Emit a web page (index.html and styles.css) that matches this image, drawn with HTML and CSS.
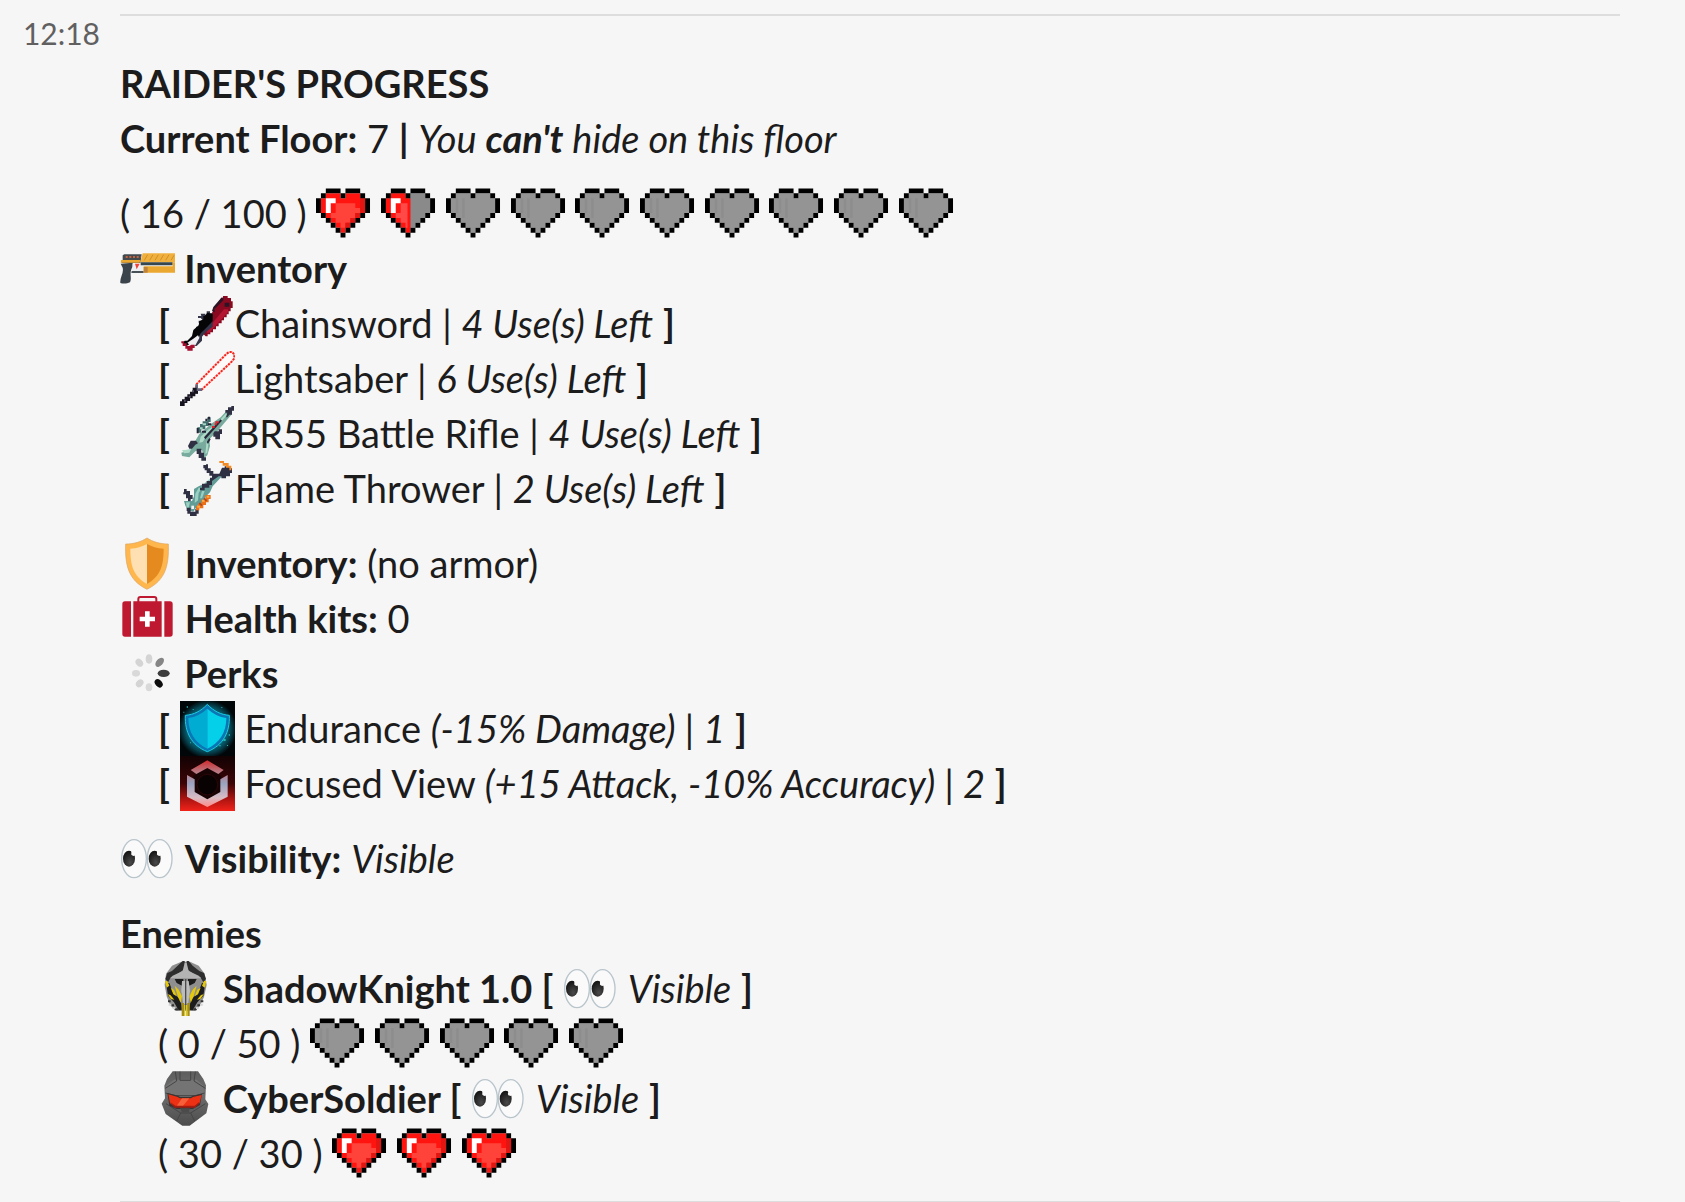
FILE: index.html
```html
<!DOCTYPE html>
<html lang="en">
<head>
<meta charset="utf-8">
<title>Raider's Progress</title>
<link rel="stylesheet" href="styles.css">
</head>
<body>
<svg class="sprites" aria-hidden="true">
  <defs>
    <path id="heart-outline" d="M2 0h3v1H2zM6 0h3v1H6zM1 1h1v1H1zM5 1h1v1H5zM9 1h1v1H9zM0 2h1v3H0zM10 2h1v3h-1zM1 5h1v1H1zM9 5h1v1H9zM2 6h1v1H2zM8 6h1v1H8zM3 7h1v1H3zM7 7h1v1H7zM4 8h1v1H4zM6 8h1v1H6zM5 9h1v1H5z"/>
    <path id="heart-fill" d="M2 1h3v1h1V1h3v1h1v3H9v1H8v1H7v1H6v1H5V8H4V7H3V6H2V5H1V2h1z"/>
    <radialGradient id="pupil" cx="0.6" cy="0.75" r="0.8"><stop offset="0" stop-color="#4a4a4a"/><stop offset="1" stop-color="#0f0f0f"/></radialGradient>
    <linearGradient id="steel" x1="0" y1="0" x2="0" y2="1"><stop offset="0" stop-color="#d02a2c"/><stop offset="0.25" stop-color="#b87a84"/><stop offset="0.5" stop-color="#9aa3c0"/><stop offset="0.8" stop-color="#d9bcc4"/><stop offset="1" stop-color="#ff8a86"/></linearGradient>
    <linearGradient id="ember" x1="0" y1="0" x2="0" y2="1"><stop offset="0" stop-color="#120203"/><stop offset="0.5" stop-color="#3c0506"/><stop offset="0.8" stop-color="#b31512"/><stop offset="1" stop-color="#f0231a"/></linearGradient>
    <radialGradient id="aura"><stop offset="0.5" stop-color="#0a8fa6"/><stop offset="0.8" stop-color="#06424f"/><stop offset="1" stop-color="#010608"/></radialGradient>
    <linearGradient id="helm" x1="0" y1="0" x2="0" y2="1"><stop offset="0" stop-color="#5d5d5d"/><stop offset="0.4" stop-color="#6f6f6f"/><stop offset="1" stop-color="#4c4c4c"/></linearGradient>
    <filter id="soft"><feGaussianBlur stdDeviation="2"/></filter>

    <symbol id="heart-full" viewBox="0 -0.5 11.2 11.2">
      <use href="#heart-fill" fill="#ff1410"/>
      <path fill="#ff433a" d="M4 3h4v1h1v1H8v1H7v1H6v1H5V7H4V6H3V5h1z"/>
      <path fill="#e01612" d="M9 2h1v3H9zM8 5h1v1H8zM7 6h1v1H7zM6 7h1v1H6z"/>
      <path fill="#fff" d="M2 2h2v1H3v2H2z"/>
      <use href="#heart-outline"/>
    </symbol>
    <symbol id="heart-empty" viewBox="0 -0.5 11.2 11.2">
      <use href="#heart-fill" fill="#949494"/>
      <path fill="#8d8d8d" d="M2 2h.5v3H2zM3.3 2h.5v4h-.5z"/>
      <use href="#heart-outline"/>
    </symbol>
    <symbol id="heart-half" viewBox="0 -0.5 11.2 11.2">
      <use href="#heart-fill" fill="#8a8a8a"/>
      <path fill="#ff1410" d="M2 1h3v1h1v7H5V8H4V7H3V6H2V5H1V2h1z"/>
      <path fill="#ff4a48" d="M4 3h1.4v5H5V7H4V6H3V5h1z"/>
      <path fill="#fff" d="M2 2h2v1H3v2H2z"/>
      <use href="#heart-outline"/>
    </symbol>
    <symbol id="eyes" viewBox="0 0 165 165">
      <g fill="#fafafa" stroke="#b9c5cc" stroke-width="4"><ellipse cx="42" cy="83" rx="37" ry="57"/><ellipse cx="119" cy="83" rx="37" ry="57"/></g>
      <g fill="url(#pupil)"><ellipse cx="27" cy="83" rx="18" ry="24"/><ellipse cx="104" cy="83" rx="18" ry="24"/></g>
      <g fill="#fafafa"><path d="M30 57q6 4 4 10t7 8l8-4-6-14z"/><path d="M107 57q6 4 4 10t7 8l8-4-6-14z"/></g>
    </symbol>
  </defs>
</svg>

<main class="message">
  <time class="time">12:18</time>
  <article class="body">
    <section class="block">
      <h1 class="row">RAIDER'S PROGRESS</h1>
      <p class="row"><b>Current Floor:</b> 7 <b>|</b> <i>You <b>can't</b> hide on this floor</i></p>
    </section>

    <section class="block">
      <p class="row">( 16 / 100 )
        <span class="hearts">
          <svg class="emoji"><use href="#heart-full"/></svg>
          <svg class="emoji"><use href="#heart-half"/></svg>
          <svg class="emoji"><use href="#heart-empty"/></svg>
          <svg class="emoji"><use href="#heart-empty"/></svg>
          <svg class="emoji"><use href="#heart-empty"/></svg>
          <svg class="emoji"><use href="#heart-empty"/></svg>
          <svg class="emoji"><use href="#heart-empty"/></svg>
          <svg class="emoji"><use href="#heart-empty"/></svg>
          <svg class="emoji"><use href="#heart-empty"/></svg>
          <svg class="emoji"><use href="#heart-empty"/></svg>
        </span>
      </p>
      <h2 class="row">
        <svg class="emoji" viewBox="0 0 165 165">
          <path fill="#424a4f" d="M8 43l5-3h52l-4 26H4l4-9z"/>
          <path fill="#3b444a" d="M2 68l36-3v12c-5 7-7 16-6 28 1 10 0 14-2 19-8 4-21 5-29 2C-1 108 12 98 8 80z"/>
          <path fill="#edf0f2" d="M38 68h32v27H36z"/>
          <path fill="#f44336" d="M45 68h14L50 85z"/>
          <path fill="#485157" d="M35 90h36v6H34z"/>
          <path fill="#f0b03e" d="M68 37h97v27H61z"/>
          <path stroke="#d18f27" stroke-width="3" d="M83 41L73 58M99 41L89 58M115 41l-10 17M131 41l-10 17M147 41l-10 17M162 43l-9 15"/>
          <path fill="#37474f" d="M62 64h96v9H62z"/>
          <path fill="#eba830" d="M71 76h94v19H71zM158 64h7v14h-7z"/>
          <path fill="#be823b" d="M71 78h12v17H71z"/>
          <path stroke="#ef6c3e" stroke-width="4" stroke-dasharray="6 5" d="M17 48h45"/>
          <path fill="#eba830" d="M3 57h58l-2 8H2z"/>
        </svg>
        Inventory
      </h2>
      <ul class="list">
        <li class="row"><b>[</b>
          <svg class="emoji" viewBox="0 0 165 165">
            <path fill="#890a20" d="M124 5h5V0h14v6h10v10h5v20h-6v10h-6v9h-6v9h-8v9h-7v9h-9v9h-8v9h-9v9h-8v6h-8v6h-6L60 104l40-60z"/>
            <path fill="#b41632" d="M132 40h12v8l-56 62h-8v-8z"/>
            <path fill="#2b1424" d="M124 5h6v8l-26 26v10l-8-4 4-12zM134 20h14v12h-14z"/>
            <path fill="#35354a" d="M62 53h14v5h10v-4h-6v-8h10v6h8v40L78 108 66 122v12L50 150h-6v-8l14-18-2-20-8-2V92l12 2 4-8-8-6v-6h14l-8-8h-8v-6h10z"/>
            <path fill="#050507" d="M82 50l16 4v22L76 98 62 112l-8 18-22 12-12 8-12-8 6-8h8l14-14 4-18 16-14 2-12 12-6V60h4z"/>
            <path fill="#f0edf2" d="M40 128l14-10 4 8-12 22H30l-8-8z"/>
            <path fill="#a40f2f" d="M4 136h8v6h8v8h8l6-4h10v10h-6v8H22v-6h-6v-8H8v-8H4z"/>
          </svg>Chainsword | <i>4 Use(s) Left</i> <b>]</b></li>
        <li class="row"><b>[</b>
          <svg class="emoji" viewBox="0 0 165 165">
            <path fill="#fffafa" d="M52 104L144 8h16v14L66 114z"/>
            <path fill="none" stroke="#ffb9b3" stroke-width="5" d="M49 112V100l90-91 8-6h10l6 8v11l-8 10-90 84"/>
            <path fill="none" stroke="#f4241c" stroke-width="6" stroke-dasharray="6 4" d="M49 110V100l90-91 8-6h10l6 8v11l-8 10-90 84"/>
            <path fill="#66657c" d="M46 100h8v12h12v8H54v8h-8v-8h-6v-8h6z"/>
            <path fill="#16131f" d="M38 110h12v10h4v8h-8v8h-8v6h-8v8h-8v6h-8v9H0v-14h6v-6h8v-8h8v-7h8v-8h8z"/>
            <path fill="#555266" d="M36 118h6v6h-6zM26 134h6v6h-6zM12 146h5v6h-5z"/>
          </svg>Lightsaber | <i>6 Use(s) Left</i> <b>]</b></li>
        <li class="row"><b>[</b>
          <svg class="emoji" viewBox="0 0 165 165">
            <path fill="#78ab9d" d="M140 14h16v10L112 76l-24 24 2 20-8 28-10 8-6-24-20 4-18 18-22-4-2-10 26-8 28-48 40-34 24-16z"/>
            <path fill="#addbc8" d="M136 24h8l-32 36-24 18-20 30-10 2 4-18 24-22 20-12zM80 104h6l-4 36-6 4zM6 132h10l18-4-6 12-16 2z"/>
            <path fill="#303044" d="M144 4h10V0h8v14h-6v12h-8l-6 8h-4l4-14h-6V12h8zM104 76h12v-6h10v14h-6v16h-14V92h-6V82zM32 104h16l6 8-8 4-10 12h-8l-4-8zM50 128h14v12h8v14h6v10H64v-8h-8v-12h-6z"/>
            <path fill="#27273a" d="M72 94l50-54 4 4-50 56zM80 108l8-12 4 4-8 14z"/>
            <path fill="#416c6c" d="M60 54h8v-8h14V34h10v14h-6v12H76v10H64v10H52V64h8z"/>
            <path fill="#262639" d="M76 38h8v-6h6v8h-8v6h-6zM50 66h6v16h-6zM84 52h10v6H84zM66 74h12v6H66z"/>
            <path fill="#a6d3c3" d="M68 52h10v6H68zM60 64h8v6h-8z"/>
            <path fill="#e6212a" d="M106 46h10v6h-6v6h-6v-6h2zM96 60h8v6h-8z"/>
          </svg>BR55 Battle Rifle | <i>4 Use(s) Left</i> <b>]</b></li>
        <li class="row"><b>[</b>
          <svg class="emoji" viewBox="0 0 165 165">
            <path fill="#629c96" d="M106 44l20 2-28 30-8 18-14 14-10 24-14 2-12 18-16-4-8-14-4-14h24l6-14V84l14-8 22-10z"/>
            <path fill="#9ad0c2" d="M56 80h10l-10 16-2 22-10 8 2-28zM92 52h8l-14 14H74zM18 124h12l-4 16h-6zM66 90h8l-8 22h-6z"/>
            <path fill="#303044" d="M70 12h8v-2h6v12h8v8h8v8h18l8-18h8v-4h16v6h6v14h-6v10h-12v6h-14v-6h-8L96 60v12h-8v8H74v8H60v-8h6V68h14v-8h10V50h6v-6h-8v-8h-8v-8h-6v-6h-4zM12 84h8v6h10v12h8v12h-6v6h-8v-8h-6v-12h-8v-6h2zM20 140h12v12h14v-8h10v14h-6v7H30v-7h-8v-8h-2z"/>
            <path fill="#f28a28" d="M118 0h14v6h14v8h8v14h-6v-8h-10v-6h-10V6h-10z"/>
            <path fill="#eb7119" d="M76 102h16v12h-6v10h-8v8h-8v10H58v6H48v-14h6v-6h10v-12h12z"/>
            <path fill="#ffad42" d="M80 104h8v6h-8zM66 116h8v6h-8zM52 134h8v6h-8z"/>
            <path fill="#b04b1d" d="M74 110l8 8-4 4-8-8zM60 124l8 8-4 4-8-8z"/>
            <path fill="#f6f2f2" d="M34 134h8v10h-8z"/>
          </svg>Flame Thrower | <i>2 Use(s) Left</i> <b>]</b></li>
      </ul>
    </section>

    <section class="block">
      <p class="row">
        <svg class="emoji" viewBox="0 0 165 165">
          <path fill="#ffb74d" stroke="#d9a563" stroke-width="2" d="M81 6c17 11 38 18 64 18 2 62-7 108-64 136C24 132 15 86 17 24c26 0 47-7 64-18z"/>
          <path fill="#ffe0b2" d="M81 24c-15 8-30 13-50 14 0 50 9 82 50 106z"/>
          <path fill="#e58a1f" d="M81 24c15 8 30 13 50 14 0 50-9 82-50 106z"/>
        </svg>
        <b>Inventory:</b> (no armor)
      </p>
      <p class="row">
        <svg class="emoji" viewBox="0 0 165 165">
          <g fill="#be1931"><path d="M15 31h18v106H15q-8 0-8-8V39q0-8 8-8zM40 31h85v106H40zM133 31h17q8 0 8 8v90q0 8-8 8h-17z"/></g>
          <path fill="none" stroke="#be1931" stroke-width="6" d="M55 33V24q0-6 6-6h42q6 0 6 6v9"/>
          <path fill="#fff" d="M75 61h14v16h16v14H89v16H75V91H59V77h16z"/>
        </svg>
        <b>Health kits:</b> 0
      </p>
      <h2 class="row">
        <svg class="emoji" viewBox="0 0 165 165">
          <g filter="url(#soft)">
            <ellipse cx="87" cy="39" rx="10" ry="14" fill="#d4d4d4"/>
            <ellipse cx="119" cy="49" rx="10" ry="16" fill="#858585" transform="rotate(42 119 49)"/>
            <ellipse cx="131" cy="82" rx="18" ry="11" fill="#3c3c3c"/>
            <ellipse cx="116" cy="112" rx="10" ry="14" fill="#080808" transform="rotate(-42 116 112)"/>
            <ellipse cx="87" cy="124" rx="10" ry="12" fill="#d9d9d9"/>
            <ellipse cx="59" cy="112" rx="10" ry="13" fill="#d4d4d4" transform="rotate(42 59 112)"/>
            <ellipse cx="48" cy="82" rx="12" ry="10" fill="#d9d9d9"/>
            <ellipse cx="58" cy="50" rx="10" ry="13" fill="#d4d4d4" transform="rotate(-42 58 50)"/>
          </g>
        </svg>
        Perks
      </h2>
      <ul class="list">
        <li class="row"><b>[</b>
          <svg class="emoji" viewBox="0 0 165 165">
            <path fill="#010608" d="M0 0h165v165H0z"/>
            <circle cx="82" cy="84" r="88" fill="url(#aura)"/>
            <path fill="#0b76b4" stroke="#18cde0" stroke-width="3" d="M82 10c20 21 40 31 66 33 2 50-18 90-66 109C34 133 14 93 16 43 42 41 62 31 82 10z"/>
            <path fill="#00acd1" d="M82 23C65 38 46 48 25 51c0 42 19 74 57 92z"/>
            <path fill="#05d0ea" d="M82 23c17 15 36 25 57 28 0 42-19 74-57 92z"/>
            <path fill="#25b5b4" d="M20 16h4v4h-4zM38 24h3v3h-3zM10 32h3v3h-3zM124 18h3v3h-3zM130 114h7v6h-7zM146 100h4v4h-4zM118 132h4v4h-4zM141 132h3v3h-3zM30 124h3v3h-3z"/>
          </svg>
          Endurance <i>(-15% Damage) | 1</i> <b>]</b></li>
        <li class="row"><b>[</b>
          <svg class="emoji" viewBox="0 0 165 165">
            <path fill="url(#ember)" d="M0 0h165v165H0z"/>
            <path fill="#180304" d="M40 60l42-25 42 25v50l-42 24-42-24z"/>
            <path fill="url(#steel)" d="M32 42l50-29 49 29-16 12-33-18-33 18zM21 57l23 13v38l38 22 39-22V70l22-13v65l-61 31-61-31z"/>
            <circle cx="82" cy="86" r="31" fill="#090203" stroke="#3d0809" stroke-width="2"/>
          </svg>
          Focused View <i>(+15 Attack, -10% Accuracy) | 2</i> <b>]</b></li>
      </ul>
    </section>

    <section class="block">
      <p class="row"><svg class="emoji"><use href="#eyes"/></svg> <b>Visibility:</b> <i>Visible</i></p>
    </section>

    <section class="block">
      <h2 class="row">Enemies</h2>
      <ul class="list">
        <li class="enemy">
          <p class="row">
            <svg class="emoji" viewBox="0 0 165 165">
              <path fill="#8f8f8f" d="M70 2h26l26 12 18 24 6 34-8 36-12 26-14 16H54l-18-18-10-26-6-34 4-34L42 14z"/>
              <path fill="#2e2e2e" d="M74 0h6v24L60 38 38 50l-8 14-8-10 6-18 14-6zM92 0h-6v24l20 14 22 12 8 14 8-10-6-18-14-6-20-16z"/>
              <path fill="#b3b3b3" d="M80 6h6l6 24 30 14 8 8H36l8-8 30-14z"/>
              <path fill="#1d1d1d" d="M50 54h26v8l-4 12-16-8zM90 54h26l-6 12-16 8-4-12zM24 66h10l12 30 22 20 4 30-10 2-14-24-18-20zM142 66h-10l-12 30-22 20-4 30 10 2 14-24 18-20z"/>
              <path fill="#bcbcbc" d="M72 60h20l4 30-6 40H76l-6-40z"/>
              <path fill="#4c4c4c" d="M81 54h4v92h-4z"/>
              <path fill="#e6c80a" d="M21 60h7l6 14-8 6zM145 60h-7l-6 14 8 6zM38 80l10 6 8 20-10-6zM50 74l12 12 10 20-4 20-8-18zM128 80l-10 6-8 20 10-6zM116 74l-12 12-10 20 4 20 8-18zM29 100l8 2 12 14-10-2zM137 100l-8 2-12 14 10-2z"/>
              <path fill="#a58d12" d="M71 126h7v39h-7zM88 126h7v39h-7z"/>
              <path fill="#ddc51f" d="M78 132h4v33h-4zM84 132h4v33h-4z"/>
              <path fill="#333" d="M30 118h8v6h-8zM40 130h8v6h-8zM50 142h10v6H50zM128 118h8v6h-8zM118 130h8v6h-8zM106 142h10v6h-10z"/>
              <path fill="#d4d4d4" d="M32 128h8v6h-8zM44 138h8v6h-8zM126 128h8v6h-8zM114 138h8v6h-8z"/>
            </svg>
            <b>ShadowKnight 1.0 [</b> <svg class="emoji"><use href="#eyes"/></svg> <i>Visible</i> <b>]</b>
          </p>
          <p class="row">( 0 / 50 )
            <span class="hearts">
              <svg class="emoji"><use href="#heart-empty"/></svg>
              <svg class="emoji"><use href="#heart-empty"/></svg>
              <svg class="emoji"><use href="#heart-empty"/></svg>
              <svg class="emoji"><use href="#heart-empty"/></svg>
              <svg class="emoji"><use href="#heart-empty"/></svg>
            </span>
          </p>
        </li>
        <li class="enemy">
          <p class="row">
            <svg class="emoji" viewBox="0 0 165 165">
              <path fill="url(#helm)" d="M44 1h76l16 23 8 19-2 42 9 14-6 28-50 37H73l-50-35-12-31 10-16-2-38 8-20z"/>
              <path fill="#747474" d="M48 26h68l20 18 2 24-26 6H54l-32-6 2-24z"/>
              <path fill="none" stroke="#454545" stroke-width="3" d="M52 2l4 28-34 22M112 2l-4 28 34 22M66 2v26h32V2M22 66l32 8h58l28-8M24 98l44 28h30l44-28M68 126l-12 24M98 126l12 24"/>
              <path fill="#3b3331" d="M28 66l32 8 6 4h32l6-4 28-6-6 34-22 12H56L34 104z"/>
              <path fill="#ed3115" d="M31 70l28 8 6 4h34l6-4 26-6-6 24-14 12H50L36 96z"/>
              <path fill="#f5603a" d="M72 82h22l-22 26H54z"/>
              <path fill="#a51c10" d="M36 92l16 12h58l14-12-2 8-12 10H50z"/>
              <path fill="#4b4b4b" d="M66 112h30l-4 12H72z"/>
            </svg>
            <b>CyberSoldier [</b> <svg class="emoji"><use href="#eyes"/></svg> <i>Visible</i> <b>]</b>
          </p>
          <p class="row">( 30 / 30 )
            <span class="hearts">
              <svg class="emoji"><use href="#heart-full"/></svg>
              <svg class="emoji"><use href="#heart-full"/></svg>
              <svg class="emoji"><use href="#heart-full"/></svg>
            </span>
          </p>
        </li>
      </ul>
    </section>
  </article>
</main>
</body>
</html>
```
FILE: styles.css
```css
body {
  margin: 0;
  background: #f6f6f6;
  color: #1d1c1d;
  font-family: Lato, "Liberation Sans", sans-serif;
  font-size: 38px;
  line-height: 55px;
}

h1, h2, p, ul {
  margin: 0;
  padding: 0;
  font-size: inherit;
}

b, h1, h2 {
  font-weight: 700;
}

.sprites {
  position: absolute;
  width: 0;
  height: 0;
}

.message {
  display: grid;
  grid-template-columns: 100px 1fr;
  column-gap: 20px;
  padding: 14px 65px 0 0;
}

.time {
  color: #616061;
  font-size: 30px;
  line-height: 38px;
  text-align: right;
}

.body {
  display: flex;
  flex-direction: column;
  gap: 20px;
  padding: 40px 0 20px;
  border-top: 2px solid #dddddd;
  border-bottom: 1px solid #dddddd;
}

.row {
  min-height: 55px;
}

.list {
  padding-left: 38px;
  list-style: none;
}

.emoji {
  width: 55px;
  height: 55px;
  vertical-align: top;
}
```
